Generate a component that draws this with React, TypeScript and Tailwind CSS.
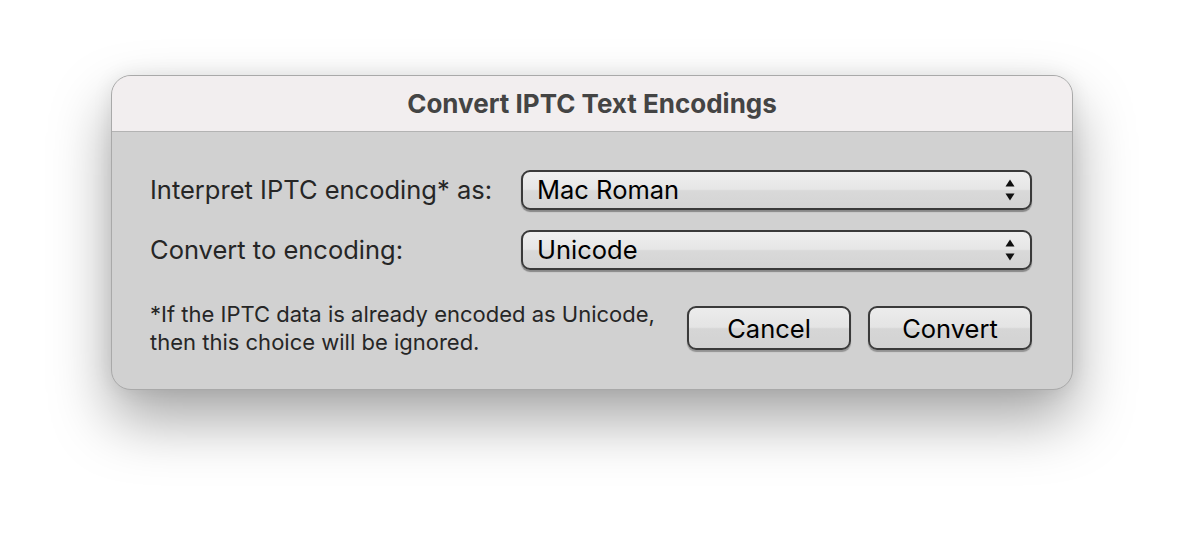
import React from 'react';

function Stepper() {
  return (
    <svg width="12" height="24" viewBox="0 0 12 24" className="shrink-0">
      <path d="M6 1.5 L10.5 8.5 L1.5 8.5 Z" fill="#111" />
      <path d="M6 22.5 L10.5 15.5 L1.5 15.5 Z" fill="#111" />
    </svg>
  );
}

function PopUp({ value }: { value: string }) {
  return (
    <div className="flex h-[40px] w-[511px] items-center justify-between rounded-[9px] border-2 border-[#3a3a3a] bg-[linear-gradient(to_bottom,#efefef_0%,#e6e6e6_48%,#d9d9d9_52%,#d4d4d4_100%)] pl-[14px] pr-[14px] shadow-[0_1.5px_1px_rgba(0,0,0,0.35)]">
      <span className="text-[25.5px] leading-none text-black">{value}</span>
      <Stepper />
    </div>
  );
}

function PushButton({ label }: { label: string }) {
  return (
    <button className="flex h-[44px] w-[164px] items-center justify-center rounded-[9px] border-2 border-[#3a3a3a] bg-[linear-gradient(to_bottom,#ececec_0%,#e4e4e4_48%,#d6d6d6_52%,#d2d2d2_100%)] pt-[2px] text-[25.5px] leading-none text-black shadow-[0_1.5px_1px_rgba(0,0,0,0.3)]">
      {label}
    </button>
  );
}

export default function App() {
  return (
    <div
      className="h-[538px] w-[1184px] overflow-hidden bg-white pl-[111px] pt-[75px]"
      style={{ fontFamily: 'Inter, "Noto Sans", sans-serif' }}
    >
      <div className="flex h-[315px] w-[962px] flex-col overflow-hidden rounded-[20px] border border-[#a9a9a9] bg-[#d1d1d1] shadow-[0_30px_60px_rgba(0,0,0,0.35),0_0_20px_rgba(0,0,0,0.08)]">
        {/* Title bar */}
        <div className="flex h-[56px] shrink-0 items-center justify-center border-b border-[#b3b3b3] bg-[#f2eeef]">
          <h1 className="text-[26px] font-bold text-[#444]">Convert IPTC Text Encodings</h1>
        </div>

        {/* Body */}
        <div className="flex flex-col pl-[38px] pr-[40px] pt-[38px]">
          <div className="flex items-center justify-between">
            <span className="text-[25.5px] text-[#262626]">Interpret IPTC encoding* as:</span>
            <PopUp value="Mac Roman" />
          </div>
          <div className="mt-[20px] flex items-center justify-between">
            <span className="text-[25.5px] text-[#262626]">Convert to encoding:</span>
            <PopUp value="Unicode" />
          </div>

          <div className="mt-[30px] flex items-center justify-between">
            <p className="text-[22px] leading-[28px] text-[#262626]">
              *If the IPTC data is already encoded as Unicode,
              <br />
              then this choice will be ignored.
            </p>
            <div className="flex gap-[17px]">
              <PushButton label="Cancel" />
              <PushButton label="Convert" />
            </div>
          </div>
        </div>
      </div>
    </div>
  );
}
